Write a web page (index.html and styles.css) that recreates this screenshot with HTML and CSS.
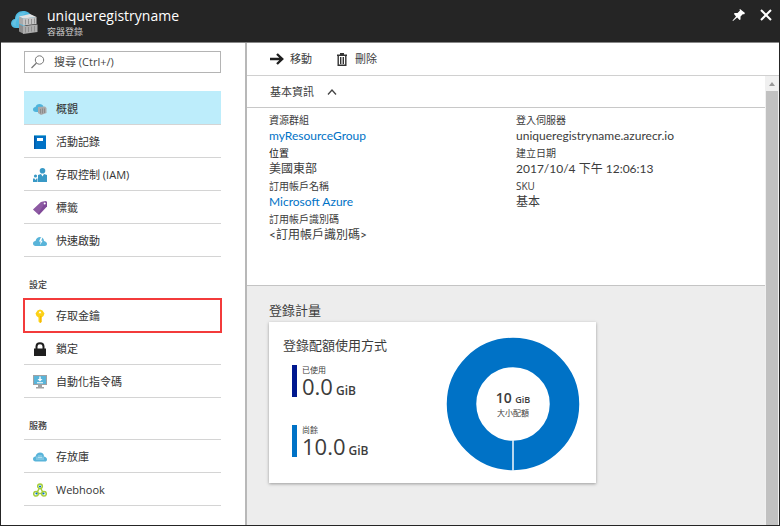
FILE: index.html
```html
<!DOCTYPE html>
<html lang="zh-Hant">
<head>
<meta charset="utf-8">
<title>uniqueregistryname</title>
<link rel="stylesheet" href="styles.css">
</head>
<body>
<div class="blade">
  <header class="blade-header">
    <svg class="blade-logo" viewBox="0 0 28 24" aria-hidden="true">
      <path fill="#4fb9e0" d="M5 17C2 17 0 15 0 12.500C0 10 2 8 4 8C4 3 7.500 0 12 0C16 0 19 2 20 4.500C22.500 4.500 24 6 24.500 8L10 17Z"/>
      <path fill="#8fd3ec" d="M5 15C4 11 6 8 9 6L15 2C10 0 5 4 5 8C2 9 1 12 2 14Z" opacity=".35"/>
      <path fill="#e2e2e2" d="M8 5.500L19 3L25.500 6L12 7.500Z"/>
      <path fill="#a9a9a9" d="M8 5.500L12 7.500V14L8 12.500Z"/>
      <path fill="#c4c4c4" d="M12 7.500L25.500 6V13L12 14.500Z"/>
      <path fill="#8e8e8e" d="M8 13L12 15V22.500L8 20.500Z"/>
      <path fill="#adadad" d="M12 15L26.500 13.500V21L12 23Z"/>
      <path stroke="#858585" stroke-width=".8" d="M14.500 8.500V13.500M17.500 8V13M20.500 8V13M23.500 7.500V12.500M14.500 16V21.500M17.500 16V21M20.500 15.500V20.500M23.500 15V20.500"/>
    </svg>
    <div class="blade-heading">
      <h1>uniqueregistryname</h1>
      <p>容器登錄</p>
    </div>
    <div class="blade-actions">
      <button type="button" aria-label="釘選"><svg width="14" height="14" viewBox="0 0 14 14"><path fill="#fff" d="M8 1L13 5L12 6.500L11 6L8.500 8.500L8.500 11.500L7.500 12L5.200 9.600L1 13L0.500 12.500L4 8.400L2 6L2.500 5L5.500 5L8 2.500L7.500 1.500Z"/></svg></button>
      <button type="button" aria-label="關閉"><svg width="12" height="12" viewBox="0 0 12 12"><path stroke="#fff" stroke-width="2" d="M1 1L11 11M11 1L1 11"/></svg></button>
    </div>
  </header>

  <div class="blade-body">
    <nav class="sidebar">
      <label class="search">
        <svg width="14" height="14" viewBox="0 0 14 14" aria-hidden="true"><circle cx="8.500" cy="5" r="4.200" fill="none" stroke="#777"/><path stroke="#777" stroke-width="1.300" d="M5.500 8L0.500 13"/></svg>
        <input type="text" placeholder="搜尋 (Ctrl+/)" aria-label="搜尋">
      </label>

      <ul class="menu">
        <li><a class="selected" href="#overview">
          <svg viewBox="0 0 14 14"><path fill="#4fb4dc" d="M3 10C1 10 0 9 0 7.500S1 5 2.500 5C3 3 4.500 2 6.500 2C8.500 2 10 3 10.500 4.500L6 10Z"/><path fill="#aaa" d="M5 5L12 4.500L13.500 6V11L8 13L5 11Z"/><path stroke="#777" d="M7.500 7V11.500M9.500 6.500V11.500M11.500 6.500V11" stroke-width=".6"/></svg>概觀</a></li>
        <li><a href="#activity">
          <svg viewBox="0 0 14 14"><path fill="#0072c6" d="M1 1H13V14H1Z"/><path fill="#59b4d9" d="M1 0H13V1H1Z"/><path fill="#0058a8" d="M1 1H2.500V14H1Z"/><path fill="#fff" d="M4 3H10V6H4Z"/></svg>活動記錄</a></li>
        <li><a href="#iam">
          <svg viewBox="0 0 14 14"><g fill="#3999c6"><circle cx="9.500" cy="2.800" r="2.800"/><path d="M5 7L8 6L9.500 8.500L11 6L14 7V14H5Z"/><circle cx="2.500" cy="8" r="1.600"/><path d="M0 10.500H1.500L2.500 12L3.500 10.500H4.500V14H0Z"/></g></svg>存取控制 (IAM)</a></li>
        <li><a href="#tags">
          <svg viewBox="0 0 14 14"><path fill="#804998" d="M8 1L13 0L14 1V5.500L6 14L0 8.500Z"/><path fill="#a57ab8" d="M8 1L13 0L5 13L0 8.500Z" opacity=".35"/><circle cx="11.700" cy="2.600" r="1" fill="#fff"/></svg>標籤</a></li>
        <li><a href="#quickstart">
          <svg viewBox="0 0 14 14"><path fill="#59b4d9" d="M2.500 12C1 12 0 11 0 9.500S1 7 2.500 7C3 4.500 5 3 7 3C9.500 3 11 5 11 7C13 7.500 14 8.500 14 10C14 11 13 12 12 12Z"/><path fill="#fff" d="M8 3L6 7.500H7.700L7 11L9.700 6.800H8.200L9.500 3.500Z"/></svg>快速啟動</a></li>
      </ul>

      <h2>設定</h2>
      <ul class="menu">
        <li><a class="highlighted" href="#keys">
          <svg viewBox="0 0 14 14"><path fill="#fcd116" d="M7 0.500L9.500 1.500L11.500 4.500L10.500 7L8.500 8.500V13L7 14L5.500 12.500V8.500L3.500 7L2.500 4.500L4.500 1.500Z"/><path fill="#f5b800" d="M7 7H8.500V13L7 14Z"/><path fill="#fff" d="M5.500 4.200L7 2L8.500 4.200Z"/></svg>存取金鑰</a></li>
        <li><a href="#locks">
          <svg viewBox="0 0 14 14"><path fill="#1e1e1e" d="M1 6.500H13V14H1Z"/><path fill="none" stroke="#1e1e1e" stroke-width="2" d="M3.500 7V4.500C3.500 0 10.500 0 10.500 4.500V7"/></svg>鎖定</a></li>
        <li><a href="#script">
          <svg viewBox="0 0 14 14"><path fill="#a0a1a2" d="M0 0H14V10H0ZM5 10H9V12H11V13.500H3V12H5Z"/><path fill="#59b4d9" d="M1 1H13V9H1Z"/><path fill="#fff" d="M6.300 1.500H7.700V4H9.500L7 6.500L4.500 4H6.300ZM4 7.200H10V8.200H4Z"/></svg>自動化指令碼</a></li>
      </ul>

      <h2 class="ruled">服務</h2>
      <ul class="menu">
        <li><a href="#repositories">
          <svg viewBox="0 0 14 14"><path fill="#59b4d9" d="M2.500 11.500C1 11.500 0 10.500 0 9S1 6.500 2.500 6.500C3 4 5 2.500 7 2.500C9.500 2.500 11 4 11 6.500C13 7 14 8 14 9.500C14 11 13 11.500 12 11.500Z"/><path stroke="#d5eef8" stroke-width=".6" d="M4 6.500V10M6 5V10M8 5V10M10 6.500V10M5 7.500H9"/></svg>存放庫</a></li>
        <li><a href="#webhook">
          <svg viewBox="0 0 14 14"><g fill="#fff" stroke="#a5cd39" stroke-width="1.500"><path d="M7 4L3.500 10.500H10.500Z" fill="none"/><circle cx="7" cy="3.200" r="2.300"/><circle cx="3" cy="10.800" r="2.300"/><circle cx="11" cy="10.800" r="2.300"/></g><g fill="#0072c6"><circle cx="7" cy="3.500" r="1.100"/><circle cx="3.500" cy="10.500" r="1.100"/><circle cx="10.500" cy="10.500" r="1.100"/></g></svg>Webhook</a></li>
      </ul>
    </nav>

    <main class="content">
      <div class="toolbar">
        <button type="button"><svg width="14" height="12" viewBox="0 0 14 12"><path fill="none" stroke="#1e1e1e" stroke-width="2.400" d="M0 6H12M7 1L12.200 6L7 11"/></svg>移動</button>
        <button type="button"><svg width="14" height="13" viewBox="-2 0 14 13"><path fill="#333" d="M3 0H7V1.500H10V3H0V1.500H3Z"/><path fill="none" stroke="#333" stroke-width="1.400" d="M1.200 3V12.200H8.800V3M3.700 4V11M6.300 4V11"/></svg>刪除</button>
      </div>

      <div class="scroller">
        <div class="pane">
          <section class="essentials">
            <button type="button" class="essentials-toggle" aria-expanded="true">基本資訊<svg width="10" height="6" viewBox="0 0 10 6"><path fill="none" stroke="#444" stroke-width="1.300" d="M1 5.500L5 1L9 5.500"/></svg></button>
            <div class="properties">
              <dl>
                <div><dt>資源群組</dt><dd><a href="#group">myResourceGroup</a></dd></div>
                <div><dt class="strong">位置</dt><dd>美國東部</dd></div>
                <div><dt>訂用帳戶名稱</dt><dd><a href="#subscription">Microsoft Azure</a></dd></div>
                <div><dt>訂用帳戶識別碼</dt><dd>&lt;訂用帳戶識別碼&gt;</dd></div>
              </dl>
              <dl>
                <div><dt>登入伺服器</dt><dd>uniqueregistryname.azurecr.io</dd></div>
                <div><dt>建立日期</dt><dd>2017/10/4 下午 12:06:13</dd></div>
                <div><dt>SKU</dt><dd>基本</dd></div>
              </dl>
            </div>
          </section>

          <section class="metering">
            <h2>登錄計量</h2>
            <article class="card">
              <div class="usage">
                <h3>登錄配額使用方式</h3>
                <div class="metric used"><span class="caption">已使用</span><span class="amount">0.0<small>GiB</small></span></div>
                <div class="metric left"><span class="caption">尚餘</span><span class="amount">10.0<small>GiB</small></span></div>
              </div>
              <div class="donut">
                <svg viewBox="0 0 134 134" aria-hidden="true"><circle cx="67" cy="67" r="51.500" fill="none" stroke="#0072c6" stroke-width="29.500"/><path stroke="#e6f1f9" stroke-width="1.600" d="M67 103V134"/></svg>
                <div class="donut-label"><strong>10 <small>GiB</small></strong><span>大小配額</span></div>
              </div>
            </article>
          </section>
        </div>
        <div class="scrollbar" aria-hidden="true"><svg width="6" height="4" viewBox="0 0 6 4"><path fill="#999" d="M0 4L3 0L6 4Z"/></svg><div class="thumb"></div></div>
      </div>
    </main>
  </div>
</div>
</body>
</html>
```
FILE: styles.css
```css
* { box-sizing: border-box; }

body, h1, h2, h3, p, ul, dl, dd { margin: 0; padding: 0; }

body {
  font-family: "Open Sans", "Noto Sans CJK TC", sans-serif;
  font-size: 11px;
  line-height: 16px;
  color: #3c3c3c;
}

button, input { font: inherit; color: inherit; }
button { display: flex; align-items: center; border: 0; padding: 0; background: none; }
a { color: #0072c6; text-decoration: none; }
ul { list-style: none; }
svg { flex: none; }

.blade {
  display: flex;
  flex-direction: column;
  min-height: 100vh;
  border: 1px solid #252525;
  border-top: 0;
}

.blade-header {
  display: flex;
  align-items: flex-start;
  height: 43px;
  padding: 6px 7px 0 10px;
  background: #252525;
  border-bottom: 1px solid #888;
  color: #fff;
}
.blade-logo { width: 28px; height: 24px; margin: 5px 8px 0 0; }
.blade-heading { flex: 1; }
.blade-heading h1 { font-size: 14px; line-height: 20px; font-weight: 400; }
.blade-heading p { font-size: 9px; line-height: 12px; color: #ccc; }
.blade-actions { display: flex; align-items: center; gap: 14px; padding-top: 2px; }

.blade-body { display: flex; flex: 1; }

.sidebar {
  flex: none;
  width: 246px;
  padding: 8px 24px 0 23px;
  border-right: 2px solid #b8b8b8;
}

.search {
  display: flex;
  align-items: center;
  gap: 9px;
  height: 22px;
  margin-bottom: 19px;
  padding: 0 6px;
  border: 1px solid #b4b4b4;
}
.search input { flex: 1; min-width: 0; border: 0; padding: 0; outline: 0; background: none; }
.search input::placeholder { color: #444; opacity: 1; }

.menu a {
  display: flex;
  align-items: center;
  gap: 9px;
  height: 33px;
  padding: 2px 0 0 9px;
  border-bottom: 1px solid #d4d4d4;
  color: #333;
}
.menu svg { width: 14px; height: 14px; }
.menu a.selected { background: #bdedfb; box-shadow: 0 -1px #bdedfb; }
.menu a.highlighted { outline: 2px solid #f33b3b; outline-offset: -1px; }

.sidebar h2 {
  height: 42px;
  padding: 20px 5px 0;
  font-size: 9px;
  line-height: 16px;
  font-weight: 500;
}
.sidebar h2.ruled { border-bottom: 1px solid #d4d4d4; }

.content { display: flex; flex: 1; flex-direction: column; min-width: 0; }

.toolbar {
  display: flex;
  gap: 23px;
  height: 33px;
  padding: 0 23px;
  border-bottom: 1px solid #d0d0d0;
}
.toolbar button { gap: 6px; }

.scroller { display: flex; flex: 1; }
.pane { display: flex; flex: 1; flex-direction: column; min-width: 0; background: #ededed; }

.essentials { padding-bottom: 41px; background: #fff; border-bottom: 1px solid #c4c4c4; }
.essentials-toggle {
  gap: 13px;
  width: 100%;
  height: 32px;
  padding: 0 23px;
  border-bottom: 1px solid #c8c8c8;
}
.properties { display: grid; grid-template-columns: 247px 1fr; padding: 4px 0 0 22px; }
dl > div { height: 33px; }
dt { font-size: 10px; line-height: 16px; }
dt.strong { color: #111; }
dd { font-family: Lato, "Noto Sans CJK TC", sans-serif; font-size: 12px; line-height: 16px; }

.metering { padding: 14px 22px; }
.metering h2 { font-size: 13px; line-height: 20px; font-weight: 400; }
.card {
  display: flex;
  justify-content: space-between;
  max-width: 327px;
  height: 161px;
  margin-top: 2px;
  padding: 13px 16px 13px 14px;
  background: #fff;
  box-shadow: 0 1px 3px rgba(0, 0, 0, .35);
}
.card h3 { margin-bottom: 10px; font-size: 13px; line-height: 20px; font-weight: 400; }
.metric { height: 32px; margin: 0 0 28px 9px; padding-left: 5px; border-left: 5px solid; }
.metric.used { border-color: #00188f; }
.metric.left { border-color: #0072c6; }
.metric span { display: block; color: #3c3c3c; }
.metric .caption { font-size: 8px; line-height: 9px; }
.metric .amount { font-size: 22px; line-height: 24px; font-weight: 500; }
.metric small { margin-left: 3px; font-size: 12px; font-weight: 600; }

.donut { display: grid; place-items: center; width: 134px; height: 134px; margin-top: 2px; }
.donut > * { grid-area: 1 / 1; }
.donut-label { text-align: center; }
.donut-label strong { display: block; font-size: 14px; line-height: 16px; font-weight: 600; }
.donut-label small { font-size: 9px; }
.donut-label span { display: block; font-size: 8px; line-height: 10px; }

.scrollbar {
  display: flex;
  flex: none;
  flex-direction: column;
  align-items: center;
  width: 14px;
  padding-top: 6px;
  background: #f0f0f0;
}
.thumb { flex: 1; width: 12px; margin-top: 5px; background: #c1c1c1; }
```
